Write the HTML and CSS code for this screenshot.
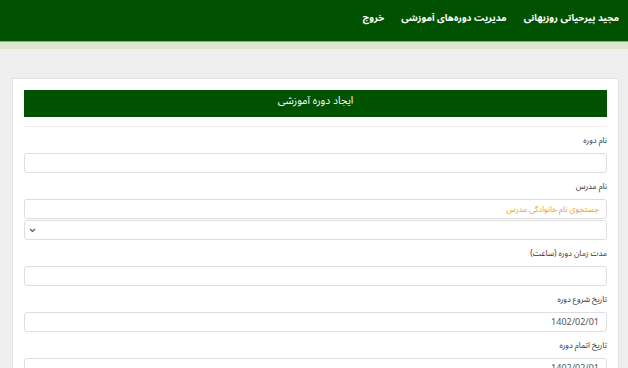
FILE: index.html
```html
<!DOCTYPE html>
<html lang="fa" dir="rtl">
<head>
  <meta charset="UTF-8" />
  <title>ایجاد دوره آموزشی</title>
  <link rel="stylesheet" href="styles.css">
</head>
<body>
  <div class="topbar">
    <a href="#">مجید پیرحیاتی روزبهانی</a>
    <a href="#">مدیریت دوره‌های آموزشی</a>
    <a href="#">خروج</a>
  </div>
  <div class="subbar"></div>

  <div class="page">
    <div class="card">
      <div class="card-title">ایجاد دوره آموزشی</div>
      <hr class="sep">

      <label>نام دوره</label>
      <input type="text" class="field" />

      <label>نام مدرس</label>
      <input type="text" class="field search" placeholder="جستجوی نام خانوادگی مدرس" />
      <div class="field select">
        <svg width="7" height="5" viewBox="0 0 7 5"><path d="M1 1l2.5 2.5L6 1" fill="none" stroke="#555" stroke-width="1.2"/></svg>
      </div>

      <label>مدت زمان دوره (ساعت)</label>
      <input type="text" class="field" />

      <label>تاریخ شروع دوره</label>
      <input type="text" class="field" value="1402/02/01" />

      <label>تاریخ اتمام دوره</label>
      <input type="text" class="field" value="1402/02/01" />
    </div>
  </div>
</body>
</html>
```

FILE: styles.css
```css
body {
  margin: 0;
  background: #eeeeee;
  font-family: "Noto Sans Arabic", "DejaVu Sans Condensed", Tahoma, sans-serif;
  direction: rtl;
}

.topbar {
  background-color: #005200;
  height: 42px;
  box-sizing: border-box;
  padding: 10px 9px 0;
  display: flex;
  gap: 17px;
  border-bottom: 1px solid #8fae7f;
}

.topbar a {
  color: #fff;
  text-decoration: none;
  font-size: 9.5px;
  font-weight: bold;
  line-height: 16px;
}

.subbar {
  height: 7px;
  background: #dfe6d0;
}

.page {
  padding: 29px 9px 0 12px;
}

.card {
  background: #fff;
  border: 1px solid #e3e3e3;
  padding: 11px 11px;
  display: flex;
  flex-direction: column;
}

.card-title {
  background: #005200;
  color: #fff;
  height: 27px;
  line-height: 22px;
  text-align: center;
  font-size: 10.5px;
}

.sep {
  border: 0;
  border-top: 1px solid #eee;
  margin: 9px 0 8px;
}

label {
  font-size: 8px;
  color: #333;
  line-height: 12px;
  margin-bottom: 6px;
}

.field {
  height: 20px;
  box-sizing: border-box;
  border: 1px solid #dedede;
  border-radius: 3px;
  padding: 0 7px;
  font-family: "Noto Sans Arabic", "DejaVu Sans Condensed", sans-serif;
  font-size: 9px;
  color: #555;
  margin-bottom: 8px;
  direction: rtl;
}

.search {
  margin-bottom: 1px;
}

.search::placeholder {
  color: #f0a020;
  font-size: 8px;
}

.select {
  display: flex;
  align-items: center;
  justify-content: flex-end;
  padding: 0 4px;
}
```
